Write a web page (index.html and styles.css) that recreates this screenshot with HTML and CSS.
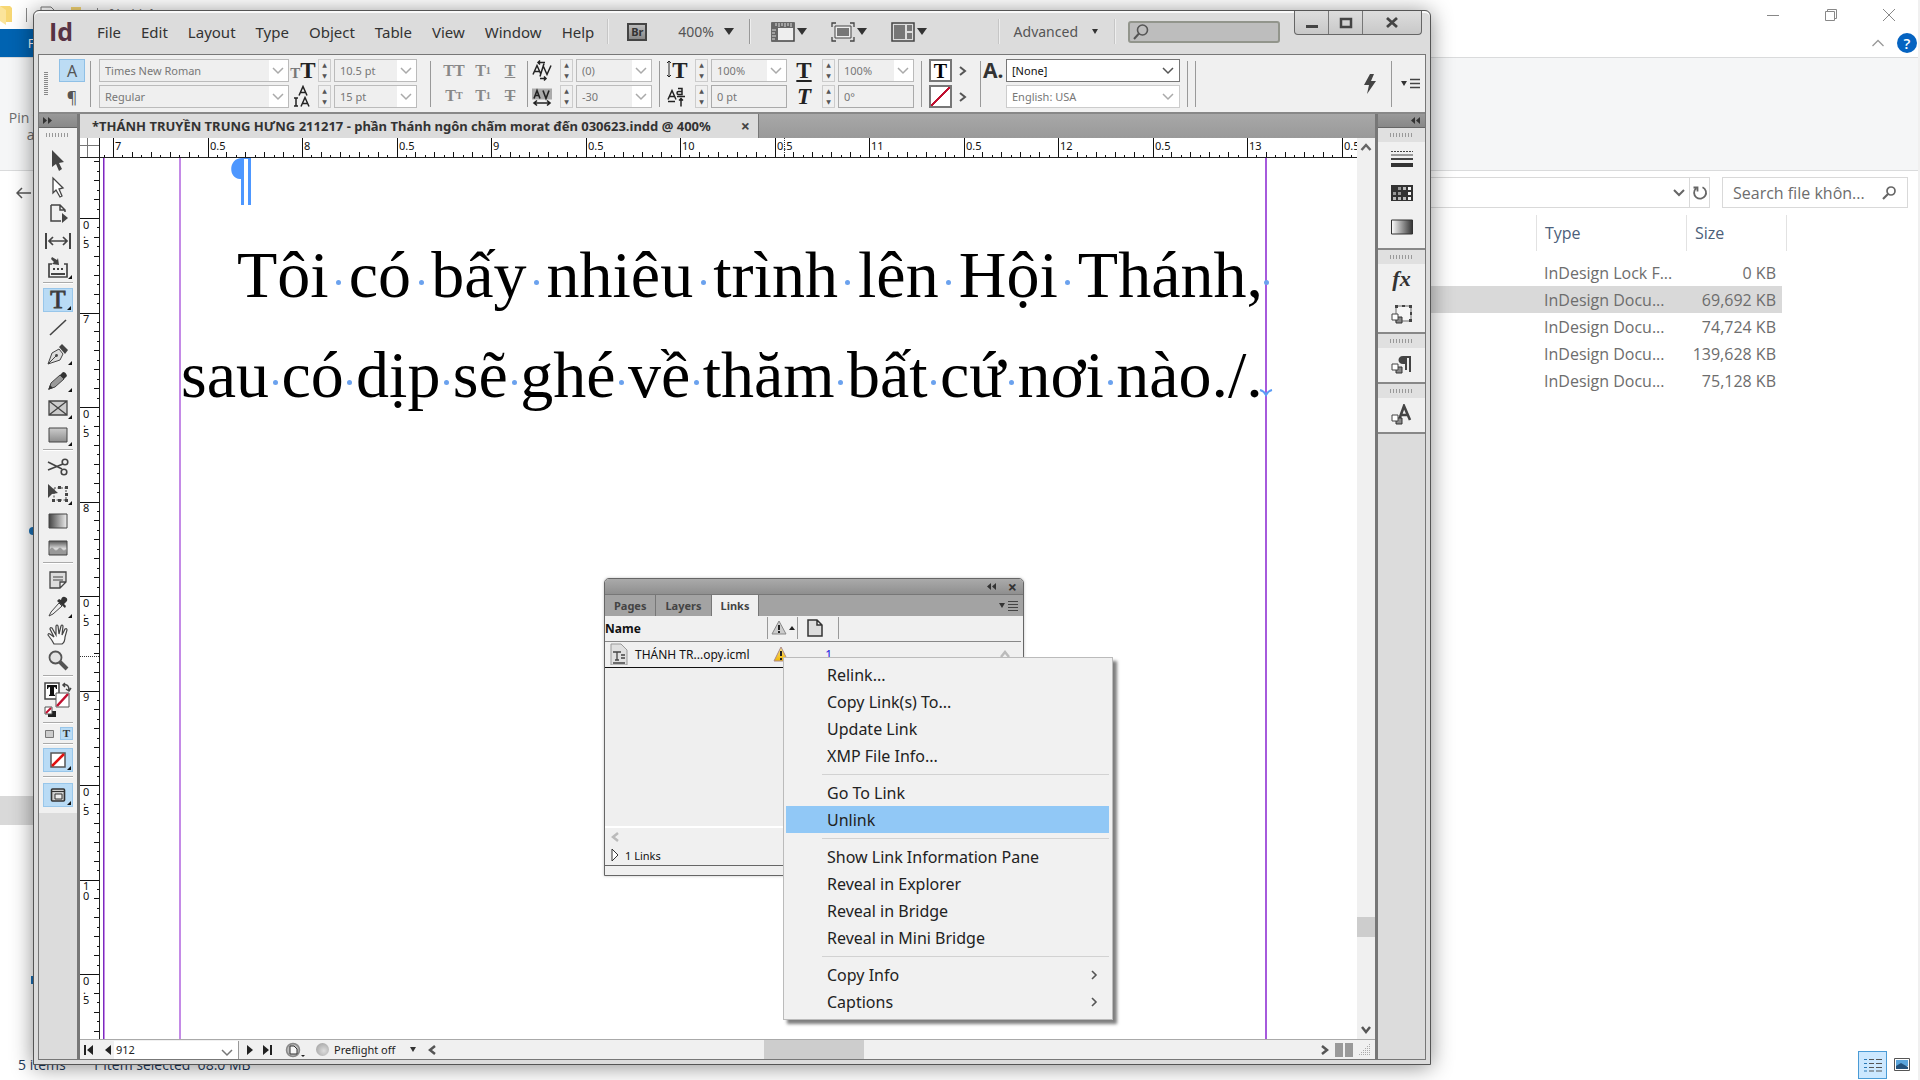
FILE: index.html
```html
<!DOCTYPE html>
<html lang="vi">
<head>
<meta charset="utf-8">
<title>THÁNH TRUYỀN TRUNG HƯNG</title>
<link rel="stylesheet" href="styles.css">
</head>
<body>
<svg class="defs" width="0" height="0" aria-hidden="true">
  <defs>
    <linearGradient id="g-h" x1="0" x2="1"><stop offset="0" stop-color="#444"/><stop offset="1" stop-color="#eee"/></linearGradient>
    <linearGradient id="g-hr" x1="0" x2="1"><stop offset="0" stop-color="#fff"/><stop offset="1" stop-color="#333"/></linearGradient>
    <linearGradient id="g-v" x1="0" x2="0" y1="0" y2="1"><stop offset="0" stop-color="#ccc"/><stop offset="1" stop-color="#8c8c8c"/></linearGradient>
    <linearGradient id="g-f" x1="0" x2="0" y1="0" y2="1"><stop offset="0" stop-color="#555"/><stop offset=".55" stop-color="#ddd"/><stop offset="1" stop-color="#888"/></linearGradient>
    <linearGradient id="g-y" x1="0" x2="0" y1="0" y2="1"><stop offset="0" stop-color="#ffe98a"/><stop offset="1" stop-color="#f0b400"/></linearGradient>
  </defs>
</svg>

<main class="explorer">
  <header class="ex-title">
    <svg class="ex-folder" width="16" height="22" viewBox="0 0 16 22"><path d="M0 2h10l2 2v14H3z" fill="#f7d774"/><path d="M0 2l6 4v15l-6-4z" fill="#fbe49b"/></svg>
    <span class="ex-bar"></span>
    <svg width="22" height="22" viewBox="0 0 22 22" fill="none" stroke="#777"><path d="M4 3h10l4 4v13H4z"/></svg>
    <svg width="18" height="22" viewBox="0 0 18 22"><path d="M2 3h10v16H2z" fill="#f7d774"/></svg>
    <span class="ex-bar"></span>
    <span class="ex-name">file không convert</span>
    <div class="ex-winbtns">
      <button aria-label="Minimize"><svg width="14" height="14" viewBox="0 0 14 14"><path d="M1 7.500h12" stroke="#888"/></svg></button>
      <button aria-label="Restore"><svg width="14" height="14" viewBox="0 0 14 14" fill="none" stroke="#888"><path d="M1.500 3.500h9v9h-9zM3.500 3.500v-2h9v9h-2"/></svg></button>
      <button aria-label="Close"><svg width="14" height="14" viewBox="0 0 14 14"><path d="M1 1l12 12M13 1L1 13" stroke="#888"/></svg></button>
    </div>
  </header>
  <nav class="ex-tabs">
    <button class="ex-file">File</button>
    <div class="ex-help">
      <button aria-label="Collapse ribbon"><svg width="14" height="10" viewBox="0 0 14 10"><path d="M1.500 8L7 2.500 12.500 8" fill="none" stroke="#999" stroke-width="1.300"/></svg></button>
      <button class="help" aria-label="Help">?</button>
    </div>
  </nav>
  <section class="ex-ribbon"><p>Pin to Quick<br>access</p></section>
  <div class="ex-address">
    <button class="back" aria-label="Back"><svg width="16" height="12" viewBox="0 0 16 12"><path d="M15 6H1.500M6 1L1 6l5 5" fill="none" stroke="#555" stroke-width="1.500"/></svg></button>
    <div class="ex-path">
      <button aria-label="Recent locations"><svg width="12" height="8" viewBox="0 0 12 8"><path d="M1 1l5 5 5-5" fill="none" stroke="#666" stroke-width="2"/></svg></button>
      <button class="refresh" aria-label="Refresh"><svg width="16" height="16" viewBox="0 0 16 16"><path d="M10.500 2.200A6 6 0 1 1 4 3.300M1.500 2.500h4v4" fill="none" stroke="#666" stroke-width="1.800"/></svg></button>
    </div>
    <label class="ex-search"><input type="text" aria-label="Search" value="Search file khôn..."><svg width="14" height="14" viewBox="0 0 14 14" fill="none" stroke="#666"><circle cx="9" cy="5" r="4" stroke-width="1.700"/><path d="M6 8L1 13" stroke-width="2.200"/></svg></label>
  </div>
  <table class="ex-files">
    <thead><tr><th class="c-name"></th><th class="c-type">Type</th><th class="c-size">Size</th></tr></thead>
    <tbody>
      <tr><td></td><td>InDesign Lock F...</td><td>0 KB</td></tr>
      <tr class="sel"><td></td><td>InDesign Docu...</td><td>69,692 KB</td></tr>
      <tr><td></td><td>InDesign Docu...</td><td>74,724 KB</td></tr>
      <tr><td></td><td>InDesign Docu...</td><td>139,628 KB</td></tr>
      <tr><td></td><td>InDesign Docu...</td><td>75,128 KB</td></tr>
    </tbody>
  </table>
  <div class="ex-tree"><i class="t-sel"></i><i class="t-dot a"></i><i class="t-dot b"></i></div>
  <footer class="ex-status">
    <span>5 items</span><span>1 item selected&nbsp; 68.0 MB</span>
    <div class="ex-views">
      <button class="on" aria-label="Details view"><svg width="18" height="14" viewBox="0 0 18 14" stroke="#555"><path d="M0 1.500h3M0 5.500h3M0 9.500h3M0 13h3" stroke="#2a7ab8"/><path d="M5 1.500h5M5 5.500h5M5 9.500h5M5 13h5M12 1.500h6M12 5.500h6M12 9.500h6M12 13h6"/></svg></button>
      <button aria-label="Large icons view"><svg width="16" height="14" viewBox="0 0 16 14"><path d="M.5.500h15v12H.500z" fill="#fff" stroke="#555"/><path d="M2 2h12v6H2z" fill="#5aa5dc"/><path d="M2 8l5-3 7 4v2H2z" fill="#23527c"/></svg></button>
    </div>
  </footer>
</main>

<section class="app" aria-label="InDesign">
  <header class="titlebar">
    <strong class="logo">Id</strong>
    <nav class="menubar">
      <button>File</button><button>Edit</button><button>Layout</button><button>Type</button><button>Object</button><button>Table</button><button>View</button><button>Window</button><button>Help</button>
    </nav>
    <div class="appbar">
      <i class="sep"></i>
      <button class="br">Br</button>
      <button class="zoom">400% <b class="car"></b></button>
      <i class="sep dark"></i>
      <button class="vbtn" aria-label="View options"><svg width="24" height="20" viewBox="0 0 24 20"><path d="M1 1h22v18H1z" fill="#eee" stroke="#444" stroke-width="1.500"/><path d="M1 1h22v5H7v13H1z" fill="#666"/><path d="M5 1v3M8 1v4M11 1v3M14 1v4M17 1v3M20 1v4M1 8h4M1 11h3M1 14h4M1 17h3" stroke="#ddd"/></svg><b class="car"></b></button>
      <button class="vbtn" aria-label="Screen mode"><svg width="24" height="20" viewBox="0 0 24 20" fill="none" stroke="#444"><path d="M1 5V1h4M19 1h4v4M1 15v4h4M19 19h4v-4" stroke-width="1.300"/><path d="M4 4h16v12H4z" fill="#eee"/><path d="M6 6h12v8H6z" fill="#777" stroke="none"/></svg><b class="car"></b></button>
      <button class="vbtn" aria-label="Arrange documents"><svg width="24" height="20" viewBox="0 0 24 20"><path d="M1 1h22v18H1z" fill="#ddd" stroke="#444" stroke-width="1.500"/><path d="M3 3h11v14H3zM16 3h5v6h-5zM16 11h5v6h-5z" fill="#777"/></svg><b class="car"></b></button>
    </div>
    <div class="workspace-bar">
      <i class="sep"></i>
      <button class="workspace">Advanced <b class="car s"></b></button>
      <i class="sep"></i>
      <label class="appsearch"><svg width="16" height="16" viewBox="0 0 16 16" fill="none" stroke="#555"><circle cx="9.500" cy="6" r="5" stroke-width="1.600"/><path d="M6 9.500L1 15" stroke-width="2"/></svg><input type="text" aria-label="Search help"></label>
    </div>
    <div class="winbtns">
      <button aria-label="Minimize"><svg width="14" height="14" viewBox="0 0 14 14"><path d="M1 9h12v3H1z" fill="#444"/></svg></button>
      <button aria-label="Maximize"><svg width="14" height="14" viewBox="0 0 14 14"><path d="M2 3h10v8H2z" fill="none" stroke="#444" stroke-width="2.500"/></svg></button>
      <button class="close" aria-label="Close"><svg width="14" height="14" viewBox="0 0 14 14"><path d="M2 2l10 9M12 2L2 11" stroke="#444" stroke-width="2.800"/></svg></button>
    </div>
  </header>

  <div class="frame">
    <div class="control">
      <i class="vgrip"></i>
      <div class="pair mode"><button class="on" aria-label="Character formatting">A</button><button aria-label="Paragraph formatting">¶</button></div>
      <i class="vsep"></i>
      <div class="pair font"><select aria-label="Font" class="dis"><option>Times New Roman</option></select><select aria-label="Style" class="dis"><option>Regular</option></select></div>
      <div class="pair ico"><span class="tt"><small>T</small>T</span><svg width="20" height="22" viewBox="0 0 20 22" stroke="#222" fill="none"><path d="M6 10L10 1l4 9M7.500 7h5M8 21l4-9 4 9M9.500 18h5" stroke-width="1.500"/><path d="M3 12v9M1 12.500h4M1 20.500h4" stroke-width="1.500"/></svg></div>
      <div class="pair spin"><span><button aria-label="Increase size">▲</button><button aria-label="Decrease size">▼</button></span><span><button aria-label="Increase leading">▲</button><button aria-label="Decrease leading">▼</button></span></div>
      <div class="pair size"><select aria-label="Size" class="dis"><option>10.5 pt</option></select><select aria-label="Leading" class="dis"><option>15 pt</option></select></div>
      <i class="vsep gap"></i>
      <div class="caps"><button>TT</button><button>T<sup>1</sup></button><button><u>T</u></button><button>T<small>T</small></button><button>T<sub>1</sub></button><button><s>T</s></button></div>
      <i class="vsep slim"></i>
      <div class="pair ico kern"><svg width="20" height="20" viewBox="0 0 20 20" fill="none" stroke="#222" stroke-width="1.500"><path d="M1 14l4-9 4 9M2.500 11h5M11 5l4 9 4-9M8 16l4-13"/><path d="M6 2h7M8 0L6 2l2 2M8 18h6M12 16l2 2-2 2"/></svg><svg width="20" height="20" viewBox="0 0 20 20"><path d="M0 2h20v11H0z" fill="#aaa"/><path d="M2 12l3-8 3 8M3.500 9h3M11 4l3 8 3-8M2 16.500h16M5 14l-3 2.500L5 19M15 14l3 2.500L15 19" fill="none" stroke="#222" stroke-width="1.600"/></svg></div>
      <div class="pair spin"><span><button aria-label="Increase kerning">▲</button><button aria-label="Decrease kerning">▼</button></span><span><button aria-label="Increase tracking">▲</button><button aria-label="Decrease tracking">▼</button></span></div>
      <div class="pair num"><select aria-label="Kerning" class="dis"><option>(0)</option></select><select aria-label="Tracking" class="dis"><option>-30</option></select></div>
      <i class="vsep tight"></i>
      <div class="pair ico wide"><span class="tt"><svg width="6" height="18" viewBox="0 0 6 18" stroke="#222" fill="none"><path d="M3 1v16M1 3l2-2 2 2M1 15l2 2 2-2"/></svg>T</span><svg width="20" height="20" viewBox="0 0 20 20" fill="none" stroke="#222" stroke-width="1.500"><path d="M1 13l4-9 4 9M2.500 10h5M1 15h7M11 2h4v6h-3.500c-2 0-2-3 0-3H15M10 10h8M14 20v-8M12 14l2-2 2 2"/></svg></div>
      <div class="pair spin"><span><button aria-label="Increase vertical scale">▲</button><button aria-label="Decrease vertical scale">▼</button></span><span><button aria-label="Raise baseline">▲</button><button aria-label="Lower baseline">▼</button></span></div>
      <div class="pair num"><select aria-label="Vertical scale" class="dis"><option>100%</option></select><input aria-label="Baseline shift" type="text" value="0 pt"></div>
      <div class="pair ico wide"><span class="tt under">T</span><span class="tt it">T</span></div>
      <div class="pair spin"><span><button aria-label="Increase horizontal scale">▲</button><button aria-label="Decrease horizontal scale">▼</button></span><span><button aria-label="Increase skew">▲</button><button aria-label="Decrease skew">▼</button></span></div>
      <div class="pair num"><select aria-label="Horizontal scale" class="dis"><option>100%</option></select><input aria-label="Skew" type="text" value="0°"></div>
      <i class="vsep tight"></i>
      <div class="pair sw"><button class="swatch" aria-label="Fill"><b>T</b></button><button class="swatch none" aria-label="Stroke"></button></div>
      <div class="pair chev"><button aria-label="Fill options"><svg width="8" height="10" viewBox="0 0 8 10"><path d="M1 1l5 4-5 4" fill="none" stroke="#555" stroke-width="2"/></svg></button><button aria-label="Stroke options"><svg width="8" height="10" viewBox="0 0 8 10"><path d="M1 1l5 4-5 4" fill="none" stroke="#555" stroke-width="2"/></svg></button></div>
      <i class="vsep tight"></i>
      <div class="pair cs"><span>A.</span><span></span></div>
      <div class="pair style"><select aria-label="Character style"><option>[None]</option></select><select aria-label="Language" class="lang"><option>English: USA</option></select></div>
      <i class="vsep tight"></i><i class="vsep tight"></i>
      <div class="ctl-end">
        <svg width="14" height="20" viewBox="0 0 14 20"><path d="M7 0h4L8 7h5L4 20l2-9H1z" fill="#444"/></svg>
        <i class="vsep"></i>
        <button class="flyout" aria-label="Panel menu"><b class="car s"></b><svg width="10" height="12" viewBox="0 0 10 12"><path d="M0 1.500h10M0 5.500h10M0 9.500h10" stroke="#444" stroke-width="1.500"/></svg></button>
      </div>
    </div>

    <div class="work">
      <aside class="tools">
        <div class="strip"><svg width="9" height="7" viewBox="0 0 9 7"><path d="M0 0l4 3.500L0 7zM5 0l4 3.500L5 7z" fill="#333"/></svg></div>
        <div class="toolbox">
          <i class="grip"></i>
          <div class="grp">
            <button aria-label="Selection"><svg width="24" height="24" viewBox="0 0 24 24"><path d="M6 2v17l4-3 3 7 3-2-3-6 5-1z" fill="#444"/></svg></button>
            <button aria-label="Direct selection"><svg width="24" height="24" viewBox="0 0 24 24"><path d="M7 3v15l3-3 4 7 2-1-3-7 4-1z" fill="#fff" stroke="#444" stroke-width="1.300"/></svg></button>
            <button aria-label="Page"><svg width="24" height="24" viewBox="0 0 24 24"><path d="M5 3h9l5 5v2M5 3v16h10M14 3v5h5" fill="none" stroke="#444" stroke-width="1.500"/><path d="M16 11v10l6-5z" fill="#444"/></svg></button>
            <button aria-label="Gap"><svg width="26" height="20" viewBox="0 0 26 20"><path d="M1 2v16M25 2v16" stroke="#444" stroke-width="2"/><path d="M4 10h18M8 6l-4 4 4 4M18 6l4 4-4 4" fill="none" stroke="#444" stroke-width="1.700"/></svg></button>
            <button class="more" aria-label="Content collector"><svg width="24" height="24" viewBox="0 0 24 24"><path d="M6 8H3v13h18V8h-3" fill="none" stroke="#444" stroke-width="1.700"/><path d="M7 12h2v2H7zM11 12h2v2h-2zM15 12h2v2h-2zM5 17h14v2H5zM6 1l5 3 1-2 1 7-7-1 2-2-3-3z" fill="#444"/></svg></button>
          </div>
          <i class="hsep"></i>
          <div class="grp">
            <button class="more on" aria-label="Type"><span class="bigt">T</span></button>
            <button aria-label="Line"><svg width="24" height="24" viewBox="0 0 24 24"><path d="M4 20L20 5" stroke="#444" stroke-width="1.600"/></svg></button>
            <button class="more" aria-label="Pen"><svg width="24" height="24" viewBox="0 0 24 24"><path d="M2 22l4-11 7-4 4 5-3 6z" fill="#ddd" stroke="#444"/><path d="M2 22l8-8" stroke="#444"/><circle cx="10.500" cy="13.500" r="1.400" fill="#444"/><path d="M13 5l3-3 6 6-3 4z" fill="#444"/></svg></button>
            <button class="more" aria-label="Pencil"><svg width="24" height="24" viewBox="0 0 24 24"><path d="M3 20l2-6 9-8 4 4-9 8z" fill="#999" stroke="#444"/><path d="M14 6l3-3q3 0 4 4l-3 3z" fill="#333"/><path d="M2 21l2-5 3 3z" fill="#333"/></svg></button>
            <button class="more" aria-label="Rectangle frame"><svg width="24" height="24" viewBox="0 0 24 24"><path d="M3 5h18v14H3zM3 5l18 14M21 5L3 19" fill="#ccc" stroke="#444" stroke-width="1.300"/></svg></button>
            <button class="more" aria-label="Rectangle"><svg width="24" height="24" viewBox="0 0 24 24"><path d="M3 5h18v14H3z" fill="url(#g-v)" stroke="#444"/></svg></button>
          </div>
          <i class="hsep"></i>
          <div class="grp">
            <button aria-label="Scissors"><svg width="24" height="24" viewBox="0 0 24 24" fill="none" stroke="#444" stroke-width="1.600"><path d="M2 7l14 7M2 15l15-6"/><circle cx="19" cy="7" r="2.800"/><circle cx="18" cy="17" r="2.800"/></svg></button>
            <button class="more" aria-label="Free transform"><svg width="24" height="24" viewBox="0 0 24 24"><path d="M8 6h12v12H8z" fill="none" stroke="#444" stroke-dasharray="2 1.500"/><path d="M12 4h3v3h-3zM19 4h3v3h-3zM19 11h3v3h-3zM6 17h3v3H6zM12 17h3v3h-3zM19 17h3v3h-3zM2 2v14l4-4 6-1z" fill="#444"/></svg></button>
            <button aria-label="Gradient"><svg width="24" height="24" viewBox="0 0 24 24"><path d="M3 5h18v14H3z" fill="url(#g-h)" stroke="#444"/></svg></button>
            <button aria-label="Gradient feather"><svg width="24" height="24" viewBox="0 0 24 24"><path d="M3 5h18v14H3z" fill="url(#g-f)" stroke="#444"/><path d="M4 13q2-3 4 0t4 0 4 0 4 0v5H4z" fill="#999"/></svg></button>
          </div>
          <i class="hsep"></i>
          <div class="grp">
            <button aria-label="Note"><svg width="24" height="24" viewBox="0 0 24 24"><path d="M4 4h16v10l-6 6H4zM20 14h-6v6" fill="#ddd" stroke="#444" stroke-width="1.300"/><path d="M7 9h10M7 12h10" stroke="#444"/></svg></button>
            <button class="more" aria-label="Eyedropper"><svg width="24" height="24" viewBox="0 0 24 24"><path d="M3 21l2-4 8-9 3 3-9 8z" fill="#eee" stroke="#444"/><path d="M11 6l8 7 1-2-2-2 3-3q1-3-2-4t-4 3l-2-1z" fill="#333"/></svg></button>
            <button aria-label="Hand"><svg width="24" height="24" viewBox="0 0 24 24"><path d="M8 22q-2-4-6-9 0-2 2-1l4 3L4 7q0-2 2-1l4 7V4q1-2 2 0l1 8 2-8q1-2 2 0l-1 9 3-6q2-1 2 1l-2 7q0 5-3 7z" fill="#f8f8f8" stroke="#444" stroke-width="1.200"/></svg></button>
            <button aria-label="Zoom"><svg width="24" height="24" viewBox="0 0 24 24"><circle cx="9.500" cy="8.500" r="6" fill="#e4e4e4" stroke="#555" stroke-width="1.800"/><path d="M14 13l7 7" stroke="#555" stroke-width="4"/></svg></button>
          </div>
          <i class="hsep"></i>
          <button class="fillstroke" aria-label="Fill and stroke"><svg width="30" height="38" viewBox="0 0 30 38"><path d="M2 2h14v16H2z" fill="#fff" stroke="#444" stroke-width="1.500"/><path d="M4 4h10v4h-1q0-2-2-2v7q0 1 1 1v1H6v-1q1 0 1-1V6Q5 6 5 8H4z" fill="#111"/><path d="M13 12h13v14H13z" fill="#fff" stroke="#555"/><path d="M14 25L25 13" stroke="#c01030" stroke-width="2.500"/><path d="M21 4q5-1 5 5M23 8l3 2 2-3M22 2l-2 2 2 2" fill="none" stroke="#444" stroke-width="1.500"/><path d="M5 30h8v6H5z" fill="#222"/><path d="M2 26h7v7H2z" fill="#fff" stroke="#555"/><path d="M3 32l5-5" stroke="#c01030" stroke-width="2"/></svg></button>
          <i class="hsep flat"></i>
          <div class="fmt"><button aria-label="Formatting affects container"><svg width="9" height="8" viewBox="0 0 9 8"><path d="M.5.500h8v7h-8z" fill="#ccc" stroke="#777"/></svg></button><button class="on" aria-label="Formatting affects text">T</button></div>
          <i class="hsep flat"></i>
          <button class="more on box" aria-label="Apply none"><svg width="16" height="16" viewBox="0 0 16 16"><path d="M1 1h14v14H1z" fill="#fff" stroke="#555" stroke-width="1.500"/><path d="M2 14L14 2" stroke="#e01010" stroke-width="2.500"/></svg></button>
          <i class="hsep"></i>
          <button class="more on box" aria-label="Screen mode"><svg width="16" height="16" viewBox="0 0 16 16"><rect x="1.500" y="2" width="13" height="12" rx="1" fill="#ccc" stroke="#333" stroke-width="1.600"/><path d="M2 4.500h12M5 7h7v5H5z" fill="#eee" stroke="#333"/></svg></button>
        </div>
      </aside>

      <section class="doc">
        <div class="doctabs"><div class="doctab"><span>*THÁNH TRUYỀN TRUNG HƯNG 211217 - phần Thánh ngôn chấm morat đến 030623.indd @ 400%</span><button aria-label="Close document">×</button></div></div>
        <div class="origin"></div>
        <svg class="ruler-h" id="ruler-h" height="20"></svg>
        <svg class="ruler-v" id="ruler-v" width="20"></svg>
        <div class="canvas">
          <i class="guide page"></i><i class="guide left"></i><i class="guide right"></i>
          <svg class="pilcrow" width="20" height="47" viewBox="0 0 20 47"><path d="M20 0H11C-3 0-3 21 9 21h1v26h3V1h4v46h3z" fill="#4d97ff"/></svg>
          <p class="line first"><span>Tôi</span><i></i><span>có</span><i></i><span>bấy</span><i></i><span>nhiêu</span><i></i><span>trình</span><i></i><span>lên</span><i></i><span>Hội</span><i></i><span>Thánh,</span></p>
          <p class="line"><span>sau</span><i></i><span>có</span><i></i><span>dịp</span><i></i><span>sẽ</span><i></i><span>ghé</span><i></i><span>về</span><i></i><span>thăm</span><i></i><span>bất</span><i></i><span>cứ</span><i></i><span>nơi</span><i></i><span>nào./.</span></p>
          <i class="trail"></i>
          <svg class="endmark" width="14" height="8" viewBox="0 0 14 8"><path d="M1 1q4 1 6 5 2-4 6-5" fill="none" stroke="#5b9cf5" stroke-width="2"/></svg>
        </div>
        <div class="vscroll">
          <button aria-label="Scroll up"><svg width="12" height="8" viewBox="0 0 12 8"><path d="M1.500 7L6 2l4.500 5" fill="none" stroke="#666" stroke-width="2.500"/></svg></button>
          <i class="thumb"></i>
          <button aria-label="Scroll down"><svg width="10" height="8" viewBox="0 0 10 8"><path d="M1 1l4 5 4-5" fill="none" stroke="#555" stroke-width="2.500"/></svg></button>
        </div>
        <footer class="status">
          <button aria-label="First page"><svg width="9" height="10" viewBox="0 0 9 10"><path d="M0 0h2v10H0zM9 0v10L3 5z" fill="#222"/></svg></button>
          <button class="prev" aria-label="Previous page"><svg width="6" height="10" viewBox="0 0 6 10"><path d="M6 0v10L0 5z" fill="#222"/></svg></button>
          <select aria-label="Page"><option>912</option></select>
          <button aria-label="Next page"><svg width="6" height="10" viewBox="0 0 6 10"><path d="M0 0v10l6-5z" fill="#222"/></svg></button>
          <button aria-label="Last page"><svg width="9" height="10" viewBox="0 0 9 10"><path d="M7 0h2v10H7zM0 0v10l6-5z" fill="#222"/></svg></button>
          <button class="open" aria-label="Reveal"><svg width="20" height="16" viewBox="0 0 20 16"><circle cx="8" cy="8" r="6.500" fill="#bbb" stroke="#888" stroke-width="1.500"/><path d="M5 4h4l3 3v5H5z" fill="#f5f5f5" stroke="#333"/><path d="M16 13h4l-2 2z" fill="#222"/></svg></button>
          <button class="preflight"><i class="lamp"></i>Preflight off <b class="car s"></b></button>
          <div class="hscroll">
            <button aria-label="Scroll left"><svg width="8" height="10" viewBox="0 0 8 10"><path d="M7 1L2 5l5 4" fill="none" stroke="#555" stroke-width="2.500"/></svg></button>
            <i class="thumb"></i>
            <button aria-label="Scroll right"><svg width="8" height="10" viewBox="0 0 8 10"><path d="M1 1l5 4-5 4" fill="none" stroke="#555" stroke-width="2.500"/></svg></button>
          </div>
          <i class="split"></i>
          <svg class="size" width="12" height="12" viewBox="0 0 12 12" fill="#aaa"><path d="M10 0h1v1h-1zM8 2h1v1H8zM10 2h1v1h-1zM6 4h1v1H6zM8 4h1v1H8zM10 4h1v1h-1zM4 6h1v1H4zM6 6h1v1H6zM8 6h1v1H8zM10 6h1v1h-1zM2 8h1v1H2zM4 8h1v1H4zM6 8h1v1H6zM8 8h1v1H8zM10 8h1v1h-1zM0 10h1v1H0zM2 10h1v1H2zM4 10h1v1H4zM6 10h1v1H6zM8 10h1v1H8zM10 10h1v1h-1z"/></svg>
        </footer>
      </section>

      <aside class="dock">
        <div class="strip r"><svg width="9" height="7" viewBox="0 0 9 7"><path d="M4 0L0 3.500 4 7zM9 0L5 3.500 9 7z" fill="#333"/></svg></div>
        <div class="dgrp"><div class="dgrip"><i class="grip"></i></div>
          <button aria-label="Stroke"><svg width="22" height="18" viewBox="0 0 22 18"><path d="M0 1.500h22" stroke="#444" stroke-dasharray="2 1"/><path d="M0 5h22" stroke="#444"/><path d="M0 9h22" stroke="#444" stroke-width="2"/><path d="M0 15h22" stroke="#333" stroke-width="4"/></svg></button>
          <button aria-label="Swatches"><svg width="22" height="18" viewBox="0 0 22 18"><path d="M0 1h22v16H0z" fill="#333"/><path d="M7 3h3v3H7zM2 8h3v3H2zM7 8h3v3H7z" fill="#999"/><path d="M12 3h3v3h-3zM2 13h3v3H2zM7 13h3v3H7zM12 13h3v3h-3z" fill="#bbb"/><path d="M17 3h3v3h-3zM17 8h3v3h-3zM17 13h3v3h-3z" fill="#f4f4f4"/></svg></button>
          <button aria-label="Gradient"><svg width="22" height="18" viewBox="0 0 22 18"><path d="M.5 2h21v14H.500z" fill="url(#g-hr)" stroke="#333"/></svg></button>
        </div>
        <div class="dgrp"><div class="dgrip"><i class="grip"></i></div>
          <button class="fx">fx</button>
          <button aria-label="Object styles"><svg width="22" height="22" viewBox="0 0 22 22"><path d="M5 2h15v15H5z" fill="#f6f6f6" stroke="#999" stroke-width="1.500"/><path d="M4 1h3v3H4zM11 1h3v2h-3zM18 1h3v3h-3zM19 8h2v3h-2zM18 15h3v3h-3z" fill="#444"/><path d="M5 13h6v6H5z" fill="#888" stroke="#333"/><path d="M1 10h6v6H1z" fill="#fff" stroke="#444"/></svg></button>
        </div>
        <div class="dgrp"><div class="dgrip"><i class="grip"></i></div>
          <button aria-label="Paragraph styles"><svg width="22" height="22" viewBox="0 0 22 22"><path d="M20 2h-8c-6 0-6 8 0 8h2v6h2V4h2v14h2z" fill="#444"/><path d="M5 13h6v6H5z" fill="#888" stroke="#333"/><path d="M1 10h6v6H1z" fill="#fff" stroke="#444"/></svg></button>
        </div>
        <div class="dgrp"><div class="dgrip"><i class="grip"></i></div>
          <button aria-label="Character styles"><svg width="22" height="22" viewBox="0 0 22 22"><path d="M8 16l5-14 6 14M10 11h7" fill="none" stroke="#444" stroke-width="2.600"/><path d="M5 14h6v6H5z" fill="#888" stroke="#333"/><path d="M1 11h6v6H1z" fill="#fff" stroke="#444"/></svg></button>
        </div>
      </aside>
    </div>
  </div>

  <section class="links" aria-label="Links">
    <header class="l-head"><svg width="9" height="7" viewBox="0 0 9 7"><path d="M4 0L0 3.500 4 7zM9 0L5 3.500 9 7z" fill="#333"/></svg><button aria-label="Close panel">×</button></header>
    <nav class="l-tabs"><button>Pages</button><button>Layers</button><button class="on">Links</button>
      <button class="flyout" aria-label="Panel menu"><b class="car s"></b><svg width="10" height="12" viewBox="0 0 10 12"><path d="M0 1.500h10M0 4.500h10M0 7.500h10M0 10.500h10" stroke="#444"/></svg></button></nav>
    <table class="l-table">
      <thead><tr><th class="n">Name</th>
        <th class="w"><svg width="24" height="16" viewBox="0 0 24 16"><path d="M8 1l7 13H1z" fill="#ccc" stroke="#888"/><path d="M8 5v5M8 11v2" stroke="#222" stroke-width="2"/><path d="M18 10h6l-3-4z" fill="#222"/></svg></th>
        <th class="p"><svg width="16" height="18" viewBox="0 0 16 18"><path d="M1 1h9l5 5v11H1zM10 1v5h5" fill="#ddd" stroke="#333" stroke-width="1.500"/></svg></th><th></th></tr></thead>
      <tbody><tr><td><div class="l-name"><svg width="18" height="22" viewBox="0 0 18 22"><path d="M1 1h10l6 6v15H1z" fill="#e0e0e0" stroke="#999"/><path d="M3 9h8M7 9v8M5 17h4M11 12h4M11 15h4M3 20h12" stroke="#444" stroke-width="1.300"/></svg><span>THÁNH TR...opy.icml</span></div></td>
        <td class="warn"><svg width="20" height="16" viewBox="0 0 20 16"><path d="M10 1l7 14H3z" fill="url(#g-y)" stroke="#a88"/><path d="M10 5v5M10 12v2" stroke="#222" stroke-width="2"/></svg></td><td class="pg"><a href="#page">1</a></td>
        <td class="sc"><svg width="10" height="8" viewBox="0 0 10 8"><path d="M1 7l4-5 4 5" fill="none" stroke="#bbb" stroke-width="2.500"/></svg></td></tr></tbody>
    </table>
    <div class="l-body"></div>
    <div class="l-scroll"><svg width="8" height="10" viewBox="0 0 8 10"><path d="M7 1L2 5l5 4" fill="none" stroke="#bbb" stroke-width="2.500"/></svg></div>
    <div class="l-foot"><svg width="8" height="14" viewBox="0 0 8 14"><path d="M1 1v12l6-6z" fill="#fff" stroke="#333"/></svg>1 Links</div>
    <div class="l-end"></div>
  </section>

  <menu class="ctx">
    <li><button>Relink...</button></li><li><button>Copy Link(s) To...</button></li><li><button>Update Link</button></li><li><button>XMP File Info...</button></li>
    <li class="rule"></li>
    <li><button>Go To Link</button></li><li><button class="hot">Unlink</button></li>
    <li class="rule"></li>
    <li><button>Show Link Information Pane</button></li><li><button>Reveal in Explorer</button></li><li><button>Reveal in Bridge</button></li><li><button>Reveal in Mini Bridge</button></li>
    <li class="rule"></li>
    <li><button>Copy Info<svg width="7" height="10" viewBox="0 0 7 10"><path d="M1 1l4 4-4 4" fill="none" stroke="#555" stroke-width="1.600"/></svg></button></li>
    <li><button>Captions<svg width="7" height="10" viewBox="0 0 7 10"><path d="M1 1l4 4-4 4" fill="none" stroke="#555" stroke-width="1.600"/></svg></button></li>
  </menu>
</section>
<script src="rulers.js"></script>
</body>
</html>
```
FILE: rulers.js
```js
// Draws both document rulers: a full line every half unit, ten ticks between.
const NS = 'http://www.w3.org/2000/svg';
const HALF = 94.5;

function add(parent, name, attrs, text) {
  const el = document.createElementNS(NS, name);
  for (const key in attrs) el.setAttribute(key, attrs[key]);
  if (text) el.textContent = text;
  parent.appendChild(el);
}

function ticks(start, length) {
  const list = [];
  for (let i = -12; start + i * HALF / 10 < length; i++) {
    const at = Math.round(start + i * HALF / 10);
    if (at >= 0) list.push({ at, size: i % 10 === 0 ? 20 : i % 2 === 0 ? 6 : 3 });
  }
  return list;
}

const h = document.getElementById('ruler-h');
const width = h.getBoundingClientRect().width;
for (const t of ticks(13, width)) add(h, 'rect', { x: t.at, y: 20 - t.size, width: 1, height: t.size });
for (let i = 0; 15 + i * HALF < width; i++) {
  const label = i % 2 ? '0.5' : String(7 + i / 2);
  add(h, 'text', { x: Math.round(15 + i * HALF), y: 12 }, label);
}
add(h, 'path', { d: 'M684.5 0v20', stroke: '#333', 'stroke-dasharray': '1 1' });

const v = document.getElementById('ruler-v');
const height = v.getBoundingClientRect().height;
for (const t of ticks(60, height)) add(v, 'rect', { x: 20 - t.size, y: t.at, width: t.size, height: 1 });
for (let i = 0; 90 + i * HALF < height; i++) {
  const y = Math.round(60 + i * HALF);
  const whole = String(6 + (i + 1) / 2);
  if (i % 2) [...whole].forEach((c, n) => add(v, 'text', { x: 3, y: y + 10 + n * 10 }, c));
  else [['0', 11], ['.', 20], ['5', 30]].forEach(([c, dy]) => add(v, 'text', { x: 3, y: y + dy }, c));
}
add(v, 'path', { d: 'M0 498.5h20', stroke: '#333', 'stroke-dasharray': '1 1' });
```
FILE: styles.css
```css
* { box-sizing: border-box; }
body { margin: 0; min-height: 100vh; position: relative; overflow: hidden; background: #fff; font-family: "Noto Sans", sans-serif; font-size: 11px; }
button, input, select { font: inherit; color: inherit; margin: 0; padding: 0; border: 0; background: none; border-radius: 0; }
button { display: flex; align-items: center; justify-content: center; }
select, input { appearance: none; outline: 0; min-width: 0; }
svg { display: block; flex: none; }
i { display: block; }
.defs { position: absolute; }

/* Explorer */
.explorer { min-height: 100vh; display: flex; flex-direction: column; font-family: "Open Sans", sans-serif; font-size: 16px; color: #6d6d6d; border-right: 2px solid #f0f0f0; position: relative; }
.ex-title { height: 29px; display: flex; align-items: center; gap: 10px; }
.ex-bar { width: 1px; height: 14px; background: #888; }
.ex-name { font-size: 14px; }
.ex-winbtns { margin-left: auto; display: flex; }
.ex-winbtns button { width: 58px; height: 28px; }
.ex-tabs { height: 29px; display: flex; justify-content: space-between; border-bottom: 1px solid #dadbdc; }
.ex-file { width: 76px; background: #0063b1; color: #fff; font-size: 13px; }
.ex-help { display: flex; align-items: center; gap: 12px; padding-right: 1px; }
.help { width: 20px; height: 20px; border-radius: 50%; background: #0563c1; color: #fff; font-size: 15px; font-weight: 600; }
.ex-ribbon { height: 113px; background: #f5f6f7; border-bottom: 1px solid #dadbdc; font-size: 14px; line-height: 17px; text-align: center; }
.ex-ribbon p { margin: 51px 0 0 5px; width: 86px; }
.ex-address { display: flex; padding: 6px 10px 6px 16px; }
.back { margin-right: 24px; }
.ex-path { flex: 1; height: 31px; border: 1px solid #d9d9d9; display: flex; justify-content: flex-end; margin-right: 12px; }
.ex-path button { width: 20px; }
.ex-path .refresh { border-left: 1px solid #d9d9d9; margin-left: 0; }
.ex-search { width: 186px; border: 1px solid #d9d9d9; display: flex; align-items: center; padding: 0 11px 0 10px; }
.ex-search input { flex: 1; }
.ex-files { border-collapse: separate; border-spacing: 0; table-layout: fixed; margin: 1px 131px 0 38px; }
.ex-files th { height: 36px; border-right: 1px solid #e2e2e2; font-weight: 400; text-align: left; color: #4c607a; padding: 0 0 0 8px; }
.ex-files thead::after { content: ""; display: block; height: 8px; }
.c-type { width: 150px; }
.c-size { width: 100px; }
.ex-files td { height: 27px; padding: 0 0 0 7px; line-height: 26px; white-space: nowrap; }
.ex-files td:last-child { text-align: right; padding: 0 6px 0 0; border-right: 5px solid transparent; background-clip: padding-box; }
.sel td { background-color: #d9d9d9; }
.ex-tree { position: absolute; left: 0; top: 0; }
.t-sel { position: absolute; top: 796px; width: 38px; height: 29px; background: #d9d9d9; }
.t-dot { position: absolute; left: 29px; width: 8px; height: 8px; background: #1a6fb5; border-radius: 50%; }
.t-dot.a { top: 527px; }
.t-dot.b { top: 976px; left: 31px; border-radius: 0; }
.ex-status { margin-top: auto; height: 31px; display: flex; align-items: center; gap: 26px; padding-left: 18px; font-size: 14px; color: #1e395b; }
.ex-views { margin-left: auto; display: flex; padding-right: 2px; }
.ex-views button { width: 29px; height: 28px; }
.ex-views .on { background: #cce8ff; border: 1px solid #4a9bd6; }

/* Application window */
.app { position: absolute; left: 33px; right: 489px; top: 10px; bottom: 15px; display: flex; flex-direction: column; border: 1px solid #555; border-radius: 6px 6px 0 0; padding: 0 4px 4px; background: #dcdcdc; box-shadow: 0 2px 22px rgba(0,0,0,.45), inset 0 2px 0 #fafafa; color: #333; }
.titlebar { height: 43px; display: flex; align-items: center; flex: none; padding: 0 0 2px 11px; }
.logo { font: bold 25px/41px "Open Sans", sans-serif; color: #573344; width: 48px; }
.menubar { display: flex; gap: 20px; font-size: 15px; height: 29px; }
.appbar { display: flex; align-items: center; margin-left: 13px; height: 30px; }
.sep { width: 2px; height: 25px; background: #c6c6c6; border-right: 1px solid #eee; }
.sep.dark { background: #999; }
.car { display: inline-block; border: 5px solid transparent; border-top: 7px solid #333; border-bottom: 0; }
.car.s { border-width: 5px 3px 0; }
.br { width: 20px; height: 18px; margin: 0 31px 0 18px; background: linear-gradient(#bbb, #888); border: 2px solid #444; font-weight: bold; }
.zoom { font-size: 14px; gap: 10px; margin-right: 15px; color: #555; }
.vbtn { gap: 2px; margin-left: 20px; }
.vbtn + .vbtn { margin-left: 24px; }
.workspace-bar { margin-left: auto; display: flex; align-items: center; height: 30px; }
.workspace { font-size: 14px; color: #555; gap: 14px; padding: 0 16px 0 14px; }
.appsearch { width: 152px; height: 22px; margin-left: 12px; border: 2px solid #92958c; border-radius: 3px; background: #bdbdbd; display: flex; align-items: center; padding-left: 3px; }
.appsearch input { flex: 1; }
.winbtns { display: flex; align-self: flex-start; height: 24px; margin: 0 4px 0 14px; border: 1px solid #666; border-top: 0; border-radius: 0 0 4px 4px; background: linear-gradient(#ddd, #c8c8c8); }
.winbtns button { width: 34px; border-right: 1px solid #777; }
.winbtns .close { width: 58px; border: 0; }
.frame { flex: 1; min-height: 0; border: 1px solid #777; display: flex; flex-direction: column; }

/* Control panel */
.control { height: 59px; flex: none; background: #f0f0f0; border-bottom: 2px solid #888; display: flex; align-items: center; white-space: nowrap; }
.vgrip { width: 4px; height: 24px; margin: 0 11px 0 5px; background: repeating-linear-gradient(#888 0 1px, transparent 1px 2px); }
.pair { display: flex; flex-direction: column; gap: 3px; flex: none; }
.pair > * { height: 23px; }
.mode { width: 26px; font-size: 16px; color: #555; margin-right: 5px; }
.mode .on { background: #bcdcf4; border: 1px solid #8fc0e6; }
.vsep { width: 1px; height: 46px; background: #999; flex: none; margin-right: 8px; }
.vsep.gap { margin-left: 13px; }
.vsep.slim { margin-right: 0; }
.vsep.tight { margin: 0 0 0 7px; }
.font { width: 190px; }
.control select, .control input { width: 100%; border: 1px solid #bbb; padding-left: 5px; color: #777; }
.control select { background: url("data:image/svg+xml,%3Csvg xmlns='http://www.w3.org/2000/svg' width='12' height='8'%3E%3Cpath d='M1 1l5 5 5-5' fill='none' stroke='%23aaa' stroke-width='1.500'/%3E%3C/svg%3E") right 4px center no-repeat, linear-gradient(to left, #fff 19px, #efefef 19px); }
.control .style select { background: #fff url("data:image/svg+xml,%3Csvg xmlns='http://www.w3.org/2000/svg' width='12' height='8'%3E%3Cpath d='M1 1l5 5 5-5' fill='none' stroke='%23555' stroke-width='1.500'/%3E%3C/svg%3E") right 5px center no-repeat; border-color: #777; color: #111; }
.control .style .lang { background-image: url("data:image/svg+xml,%3Csvg xmlns='http://www.w3.org/2000/svg' width='12' height='8'%3E%3Cpath d='M1 1l5 5 5-5' fill='none' stroke='%23aaa' stroke-width='1.500'/%3E%3C/svg%3E"); border-color: #ccc; color: #777; }
.control input { border: 1px solid #aaa; }
.ico { width: 20px; margin: 0 4px; align-items: center; }
.ico.kern { margin: 0 7px 0 4px; }
.ico.wide { width: 26px; }
.tt { font: bold 23px/23px "Liberation Serif", serif; color: #222; display: flex; align-items: baseline; height: 23px; }
.tt small { font-size: 15px; color: #777; }
.under { text-decoration: underline; }
.it { font-style: italic; }
.spin { width: 13px; margin: 0 3px 0 1px; }
.spin span { border: 1px solid #ccc; display: flex; flex-direction: column; }
.spin button { flex: 1; font: 6px/10px "DejaVu Sans", sans-serif; color: #555; }
.size { width: 83px; }
.caps { display: grid; grid-template-columns: 30px 28px 26px; height: 50px; margin-right: 4px; font: bold 16px/24px "Liberation Serif", serif; color: #888; }
.caps sup, .caps sub, .caps small { font-size: 10px; }
.num { width: 76px; }
.sw { margin-left: 7px; }
.swatch { width: 23px; border: 2px solid #777; background: #fff; font: bold 20px/20px "Liberation Serif", serif; color: #000; }
.swatch.none { background: linear-gradient(135deg, #fff 46%, #c01030 46% 54%, #fff 54%); }
.chev { width: 21px; }
.chev button { width: 100%; }
.cs { width: 25px; font: bold 21px/23px "Noto Sans", sans-serif; padding-left: 2px; color: #333; }
.style { width: 174px; }
.ctl-end { margin-left: auto; display: flex; align-items: center; padding-right: 5px; gap: 9px; }
.ctl-end .vsep { margin: 0 0 0 5px; }
.flyout { gap: 3px; }

/* Work area */
.work { flex: 1; min-height: 0; display: flex; }
.strip { height: 14px; background: linear-gradient(#999, #888); border-bottom: 1px solid #666; display: flex; align-items: center; padding: 0 4px; flex: none; }
.strip.r { justify-content: flex-end; padding-right: 5px; }
.tools { width: 41px; flex: none; border-right: 3px solid #777; background: #dcdcdc; }
.toolbox { background: #f0f0f0; display: flex; flex-direction: column; align-items: center; padding: 5px 3px 6px; }
.grip { width: 24px; height: 4px; background: repeating-linear-gradient(to right, #999 0 1px, transparent 1px 3px); }
.grp { display: flex; flex-direction: column; gap: 3px; }
.toolbox > .grip + .grp { margin-top: 11px; }
.tools .grp button, .box { width: 30px; height: 24px; position: relative; }
.tools .on { background: #b9dbf5; border: 1px solid #98c6ea; }
.more::after { content: ""; position: absolute; right: 1px; bottom: 1px; border-left: 4px solid transparent; border-bottom: 4px solid #111; }
.bigt { font: 25px/22px "Liberation Serif", serif; color: #333; -webkit-text-stroke: 1px #444; }
.hsep { width: 30px; height: 2px; background: #aaa; border-bottom: 1px solid #fff; margin: 2px 0 4px; flex: none; }
.hsep.flat { margin: 3px 0; }
.box + .hsep { margin: 4px 0 5px; }
.fmt { display: flex; gap: 4px; }
.fmt button { width: 13px; height: 13px; font: bold 11px/11px "Liberation Serif", serif; }
.doc { flex: 1; min-width: 0; display: grid; grid-template-columns: 20px minmax(0, 1fr) 18px; grid-template-rows: 24px 20px minmax(0, 1fr) 20px; background: #fff; }
.doctabs { grid-column: 1 / -1; background: linear-gradient(#a8a8a8, #999); display: flex; }
.doctab { background: #dcdcdc; display: flex; align-items: center; gap: 30px; padding: 0 8px 0 12px; border-right: 1px solid #777; font-weight: bold; font-size: 13px; white-space: nowrap; }
.doctab button { font-size: 16px; line-height: 20px; color: #444; }
.origin { border-right: 1px solid #222; border-bottom: 1px solid #222; background: linear-gradient(to right, transparent 7px, #777 7px 8px, transparent 8px), linear-gradient(transparent 7px, #777 7px 8px, transparent 8px); }
.ruler-h, .ruler-v { display: block; fill: #111; overflow: hidden; font: 11px "Noto Sans", sans-serif; }
.ruler-h { width: 100%; border-bottom: 1px solid #222; }
.ruler-v { height: 100%; border-right: 1px solid #222; }
.canvas { position: relative; overflow: hidden; padding: 67px 94px 0 81px; }
.guide { position: absolute; top: 0; bottom: 0; width: 2px; background: #c48ae6; }
.guide.page { left: 3px; border-left: 1px solid #7a2bbd; }
.guide.left { left: 79px; }
.guide.right { right: 90px; background: #a65adc; }
.line { margin: 0; height: 100px; display: flex; justify-content: space-between; font: 66px/100px "Liberation Serif", serif; color: #000; }
.line.first { padding-left: 56px; }
.line i, .trail { width: 5px; height: 5px; border-radius: 50%; background: #6ba2ee; margin-top: 55px; }
.trail { position: absolute; right: 88px; top: 67px; }
.pilcrow { position: absolute; left: 131px; top: 0; }
.endmark { position: absolute; right: 84px; top: 231px; }
.vscroll { grid-column: 3; grid-row: 2 / 4; background: #f0f0f0; display: flex; flex-direction: column; align-items: center; }
.vscroll button { width: 100%; height: 18px; }
.vscroll .thumb { width: 100%; height: 20px; background: #cdcdcd; margin: auto 0 84px; }
.status { grid-column: 1 / -1; background: #f0f0f0; border-top: 1px solid #aaa; display: flex; align-items: center; padding-left: 4px; color: #222; }
.status select { width: 125px; height: 18px; padding-left: 2px; border-right: 1px solid #999; margin: 0 8px 0 3px; background: #fff url("data:image/svg+xml,%3Csvg xmlns='http://www.w3.org/2000/svg' width='12' height='8'%3E%3Cpath d='M1 1l5 5 5-5' fill='none' stroke='%23777' stroke-width='1.500'/%3E%3C/svg%3E") right 5px bottom 2px no-repeat; }
.status > button { margin-right: 10px; }
.status > .prev { margin: 0 0 0 2px; }
.status > .open { margin: 0 11px 0 3px; }
.status > .preflight { gap: 5px; white-space: nowrap; margin-right: 12px; }
.preflight .car { margin-left: 10px; }
.lamp { width: 13px; height: 13px; border-radius: 50%; background: radial-gradient(circle at 60% 60%, #ddd, #999); }
.hscroll { flex: 1; display: flex; align-items: center; height: 100%; margin-right: 6px; }
.hscroll .thumb { width: 100px; height: 100%; background: #cdcdcd; margin: 0 auto 0 328px; }
.split { width: 18px; height: 14px; background: linear-gradient(to right, #999 8px, #f0f0f0 8px 10px, #999 10px); }
.status .size { width: 12px; margin: 0 4px 0 6px; }
.dock { width: 50px; flex: none; border-left: 3px solid #777; background: #dcdcdc; }
.dgrp { background: #f0f0f0; border-bottom: 2px solid #888; display: flex; flex-direction: column; align-items: center; }
.dgrip { width: 100%; height: 14px; background: #e0e0e0; display: flex; align-items: center; justify-content: center; }
.dgrp button { width: 100%; height: 34px; }
.strip + .dgrp { padding-bottom: 4px; }
.dgrp .fx { font: italic bold 22px/26px "Liberation Serif", serif; color: #333; padding-bottom: 5px; }

/* Links panel */
.links { position: absolute; left: 570px; top: 567px; width: 420px; height: 298px; display: flex; flex-direction: column; border: 1px solid #666; border-radius: 5px 5px 0 0; background: #f0f0f0; box-shadow: 0 0 3px rgba(0,0,0,.25); overflow: hidden; }
.l-head { height: 16px; background: linear-gradient(#aaa, #8f8f8f); border-bottom: 1px solid #777; display: flex; align-items: center; justify-content: flex-end; gap: 12px; padding-right: 6px; flex: none; }
.l-head button { font: bold 16px/14px "Noto Sans", sans-serif; color: #333; }
.l-tabs { height: 21px; background: #a3a3a3; display: flex; flex: none; font-weight: bold; }
.l-tabs button { padding: 0 9px; border-right: 1px solid #777; color: #444; }
.l-tabs .on { background: #f0f0f0; }
.l-tabs .flyout { margin-left: auto; border: 0; padding: 0 5px; }
.l-table { border-collapse: collapse; table-layout: fixed; width: 416px; color: #111; font-size: 12px; }
.l-table th { height: 25px; border-bottom: 1px solid #888; text-align: left; padding: 0; }
.l-table .n { width: 162px; }
.l-table .w { width: 30px; padding-left: 4px; }
.l-table .p { width: 41px; padding-left: 10px; }
.l-table th + th { background: linear-gradient(#999, #999) left center / 1px 22px no-repeat; }
.l-table td { height: 26px; padding: 0; }
.l-table .warn { padding-left: 4px; }
.l-table tr:last-child td { border-bottom: 1px solid #111; }
.l-name { display: flex; align-items: center; gap: 7px; padding-left: 5px; white-space: nowrap; }
.pg { text-align: right; }
.pg a { color: #2020e0; text-decoration: none; padding-right: 6px; }
.sc svg { margin-left: auto; margin-right: 11px; }
.l-body { flex: 1; background: #efefef; border-bottom: 2px solid #fff; }
.l-scroll { height: 17px; display: flex; align-items: center; padding-left: 6px; }
.l-foot { height: 21px; display: flex; align-items: center; gap: 6px; padding-left: 6px; border-bottom: 1px solid #666; color: #111; }
.l-end { height: 9px; }

/* Context menu */
.ctx { position: absolute; left: 749px; top: 646px; width: 330px; margin: 0; padding: 3px 3px 4px 2px; list-style: none; background: #f1f1f1; border: 1px solid #bbb; box-shadow: 4px 4px 3px rgba(0,0,0,.5); font-size: 16px; color: #222; }
.ctx button { width: 100%; height: 27px; padding: 0 11px 0 41px; justify-content: space-between; }
.ctx .hot { background: #91c8f6; }
.rule { height: 10px; margin-left: 36px; background: linear-gradient(#d2d2d2, #d2d2d2) center / 100% 1px no-repeat; }
```
